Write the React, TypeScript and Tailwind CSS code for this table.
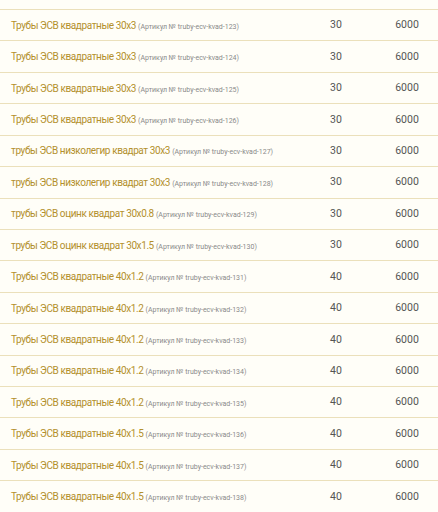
import React from "react";

const rows = [
  { name: "Трубы ЭСВ квадратные 30x3", sku: "truby-ecv-kvad-123", size: "30" },
  { name: "Трубы ЭСВ квадратные 30x3", sku: "truby-ecv-kvad-124", size: "30" },
  { name: "Трубы ЭСВ квадратные 30x3", sku: "truby-ecv-kvad-125", size: "30" },
  { name: "Трубы ЭСВ квадратные 30x3", sku: "truby-ecv-kvad-126", size: "30" },
  { name: "трубы ЭСВ низколегир квадрат 30x3", sku: "truby-ecv-kvad-127", size: "30" },
  { name: "трубы ЭСВ низколегир квадрат 30x3", sku: "truby-ecv-kvad-128", size: "30" },
  { name: "трубы ЭСВ оцинк квадрат 30x0.8", sku: "truby-ecv-kvad-129", size: "30" },
  { name: "трубы ЭСВ оцинк квадрат 30x1.5", sku: "truby-ecv-kvad-130", size: "30" },
  { name: "Трубы ЭСВ квадратные 40x1.2", sku: "truby-ecv-kvad-131", size: "40" },
  { name: "Трубы ЭСВ квадратные 40x1.2", sku: "truby-ecv-kvad-132", size: "40" },
  { name: "Трубы ЭСВ квадратные 40x1.2", sku: "truby-ecv-kvad-133", size: "40" },
  { name: "Трубы ЭСВ квадратные 40x1.2", sku: "truby-ecv-kvad-134", size: "40" },
  { name: "Трубы ЭСВ квадратные 40x1.2", sku: "truby-ecv-kvad-135", size: "40" },
  { name: "Трубы ЭСВ квадратные 40x1.5", sku: "truby-ecv-kvad-136", size: "40" },
  { name: "Трубы ЭСВ квадратные 40x1.5", sku: "truby-ecv-kvad-137", size: "40" },
  { name: "Трубы ЭСВ квадратные 40x1.5", sku: "truby-ecv-kvad-138", size: "40" },
];

export default function App() {
  return (
    <div
      className="w-[438px] h-[512px] overflow-hidden bg-[#fffef8] pt-[9px]"
      style={{ fontFamily: "Roboto, 'Noto Sans', sans-serif" }}
    >
      {rows.map((r, i) => (
        <div
          key={i}
          className="grid grid-cols-[1fr_80px_62px] items-center h-[31.43px] border-t border-[#ebe0bb]"
        >
          <div className="pl-[11px] whitespace-nowrap text-[10px] tracking-[-0.4px] text-[#b3902c]">
            {r.name}{" "}
            <span className="text-[7px] tracking-normal text-[#8a8a8a]">(Артикул № {r.sku})</span>
          </div>
          <div className="text-center text-[10.5px] text-[#555]">{r.size}</div>
          <div className="text-center text-[10.5px] text-[#555]">6000</div>
        </div>
      ))}
    </div>
  );
}
